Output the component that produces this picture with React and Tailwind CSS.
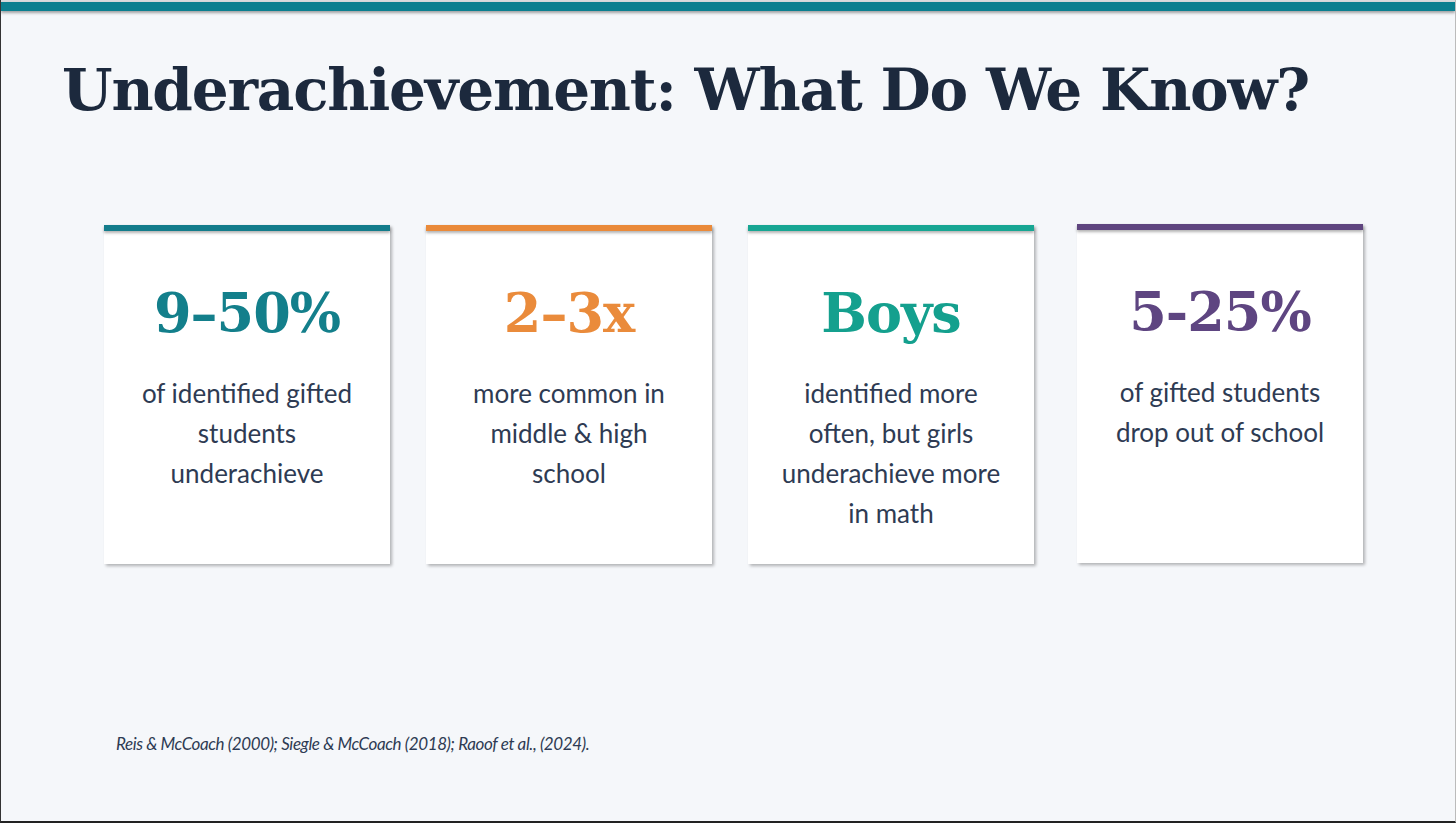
import React from "react";

const cards = [
  {
    value: "9–50%",
    bar: "bg-[#137c8b]",
    color: "text-[#137f8b]",
    lines: ["of identified gifted", "students", "underachieve"],
  },
  {
    value: "2–3x",
    bar: "bg-[#ea8a3a]",
    color: "text-[#ea8b3b]",
    lines: ["more common in", "middle & high", "school"],
  },
  {
    value: "Boys",
    bar: "bg-[#17a693]",
    color: "text-[#14a08e]",
    lines: ["identified more", "often, but girls", "underachieve more", "in math"],
  },
  {
    value: "5-25%",
    bar: "bg-[#5f457f]",
    color: "text-[#5e4581]",
    lines: ["of gifted students", "drop out of school"],
  },
];

function Card({ card, extra }) {
  return (
    <div
      className={`w-[286px] h-[339px] bg-white flex flex-col shadow-[2px_2px_3px_rgba(0,0,0,0.28)] ${extra}`}
    >
      <div className={`h-[6px] ${card.bar} shadow-[0_2px_3px_rgba(0,0,0,0.3)]`} />
      <div
        className={`mt-[52px] h-[60px] leading-[60px] text-center text-[54px] font-bold ${card.color} [font-family:'DejaVu_Serif',serif] tracking-[-1px]`}
      >
        {card.value}
      </div>
      <div className="mt-[30px] text-center text-[26px] leading-[40px] text-[#2e3b53] [font-family:Lato,'Noto_Sans',sans-serif]">
        {card.lines.map((l, i) => (
          <div key={i}>{l}</div>
        ))}
      </div>
    </div>
  );
}

export default function App() {
  return (
    <div className="w-[1456px] h-[823px] bg-[#f5f7fa] border-l border-[#333] border-r border-r-[#bbb] border-b-2 border-b-[#222] flex flex-col overflow-hidden">
      <div className="h-[2px] bg-[#d8dadc]" />
      <div className="h-[9px] bg-[#0b7f8f] shadow-[0_2px_3px_rgba(0,0,0,0.35)]" />
      <h1 className="mt-[48px] ml-[61px] text-[58px] leading-[62px] font-bold tracking-[-1.2px] text-[#1c293d] [font-family:'DejaVu_Serif',serif] whitespace-nowrap">
        Underachievement: What Do We Know?
      </h1>
      <div className="mt-[104px] ml-[103px] flex gap-[36px]">
        <Card card={cards[0]} extra="" />
        <Card card={cards[1]} extra="" />
        <Card card={cards[2]} extra="" />
        <Card card={cards[3]} extra="ml-[7px] -mt-[1px]" />
      </div>
      <div className="mt-[168px] ml-[115px] italic text-[17px] leading-[24px] tracking-[-0.4px] text-[#2e3b53] [font-family:Lato,'Noto_Sans',sans-serif]">
        Reis &amp; McCoach (2000); Siegle &amp; McCoach (2018); Raoof et al., (2024).
      </div>
    </div>
  );
}
